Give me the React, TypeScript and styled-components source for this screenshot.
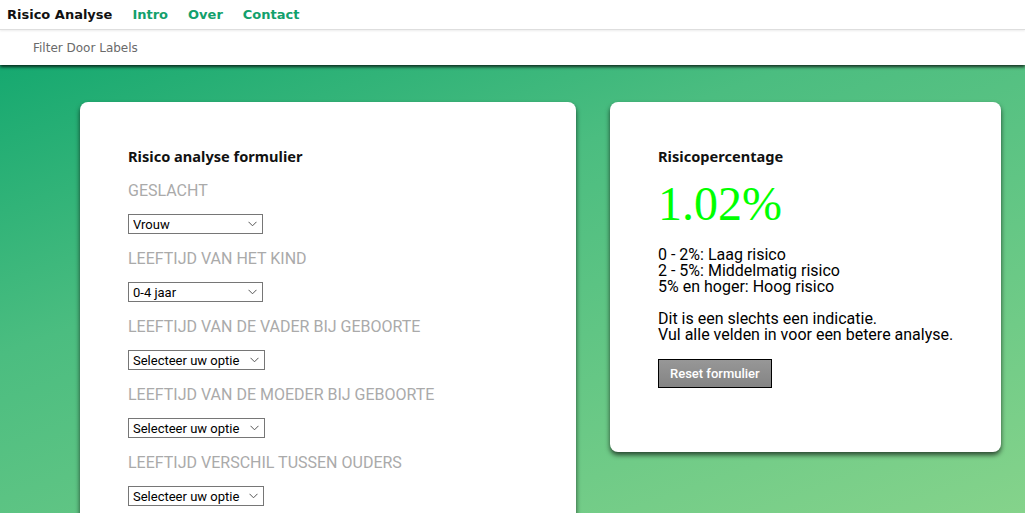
import React from "react";
import styled, { createGlobalStyle } from "styled-components";

const Global = createGlobalStyle`
  html, body { margin: 0; padding: 0; }
  body { font-family: Roboto, "Liberation Sans", sans-serif; background: #fff; overflow: hidden; }
`;

const Page = styled.div`
  width: 1025px;
  height: 513px;
  overflow: hidden;
  display: flex;
  flex-direction: column;
  background: linear-gradient(160deg, #0aa46c 0%, #4bbd80 40%, #85d38b 100%);
`;

const TopBar = styled.nav`
  flex-shrink: 0;
  height: 30px;
  box-sizing: border-box;
  background: #fff;
  display: flex;
  align-items: center;
  gap: 20px;
  padding-left: 7px;
  font-family: "DejaVu Sans", Verdana, sans-serif;
  font-weight: bold;
  font-size: 13px;
  border-bottom: 1px solid #dedede;
  box-shadow: 0 1px 2px rgba(0, 0, 0, 0.08);
  position: relative;
  z-index: 3;
`;

const Brand = styled.span`
  color: #111;
`;

const NavLink = styled.a`
  color: #12a06c;
  text-decoration: none;
`;

const FilterBar = styled.div`
  flex-shrink: 0;
  height: 35px;
  background: #fff;
  display: flex;
  align-items: center;
  padding-left: 33px;
  font-family: "DejaVu Sans", Verdana, sans-serif;
  font-size: 12px;
  color: #6a6a6a;
  box-shadow: 0 2px 3px rgba(0, 0, 0, 0.75);
  position: relative;
  z-index: 2;
`;

const Main = styled.main`
  flex: 1;
  display: flex;
  align-items: flex-start;
  gap: 34px;
  padding: 37px 0 0 80px;
`;

const Card = styled.section<{ $w: number; $h?: number }>`
  width: ${(p) => p.$w}px;
  height: ${(p) => (p.$h ? `${p.$h}px` : "auto")};
  box-sizing: border-box;
  background: #fff;
  border-radius: 8px;
  padding: 44px 30px 48px 48px;
  box-shadow: 0 3px 5px rgba(0, 0, 0, 0.65);
  flex-shrink: 0;
`;

const CardTitle = styled.h2<{ $gap: number }>`
  margin: 0 0 ${(p) => p.$gap}px;
  font-family: "Noto Sans", "Open Sans", sans-serif;
  font-weight: bold;
  font-size: 14.6px;
  line-height: 20px;
  color: #111;
`;

const Field = styled.div`
  display: flex;
  flex-direction: column;
`;

const Label = styled.label`
  height: 34px;
  display: flex;
  align-items: center;
  font-size: 16px;
  color: #aaaaaa;
  text-transform: uppercase;
`;

const SelectRow = styled.div`
  height: 34px;
  display: flex;
  align-items: center;
`;

const SelectWrap = styled.span`
  position: relative;
  display: inline-flex;
`;

const Select = styled.select<{ $w: number }>`
  appearance: none;
  -webkit-appearance: none;
  width: ${(p) => p.$w}px;
  height: 20px;
  font-family: Roboto, "Liberation Sans", sans-serif;
  font-size: 13px;
  color: #000;
  background: #fff;
  border: 1px solid #767676;
  border-radius: 0;
  padding: 0 0 0 4px;
  outline: none;
`;

const Chevron = styled.svg`
  position: absolute;
  right: 6px;
  top: 7px;
  pointer-events: none;
`;

const Big = styled.div`
  font-family: "Liberation Serif", "Times New Roman", serif;
  font-size: 48px;
  line-height: 56px;
  color: #00ff00;
  margin: 0 0 15px;
`;

const Para = styled.p`
  margin: 0 0 16px;
  font-size: 16px;
  line-height: 16px;
  color: #000;
`;

const ResetButton = styled.button`
  height: 29px;
  padding: 0 11px;
  font-family: Roboto, "Liberation Sans", sans-serif;
  font-weight: 500;
  font-size: 13px;
  color: #fff;
  background: linear-gradient(#979797, #848484);
  border: 1px solid #000;
  border-radius: 0;
`;

const fields: { label: string; value: string; w: number }[] = [
  { label: "Geslacht", value: "Vrouw", w: 135 },
  { label: "Leeftijd van het kind", value: "0-4 jaar", w: 135 },
  { label: "Leeftijd van de vader bij geboorte", value: "Selecteer uw optie", w: 137 },
  { label: "Leeftijd van de moeder bij geboorte", value: "Selecteer uw optie", w: 137 },
  { label: "Leeftijd verschil tussen ouders", value: "Selecteer uw optie", w: 136 },
];

export default function App() {
  return (
    <>
      <Global />
      <Page>
        <TopBar>
          <Brand>Risico Analyse</Brand>
          <NavLink href="#">Intro</NavLink>
          <NavLink href="#">Over</NavLink>
          <NavLink href="#">Contact</NavLink>
        </TopBar>
        <FilterBar>Filter Door Labels</FilterBar>
        <Main>
          <Card $w={496}>
            <CardTitle $gap={7}>Risico analyse formulier</CardTitle>
            {fields.map((f) => (
              <Field key={f.label}>
                <Label>{f.label}</Label>
                <SelectRow>
                  <SelectWrap>
                    <Select $w={f.w} defaultValue={f.value}>
                      <option>{f.value}</option>
                    </Select>
                    <Chevron width="9" height="6" viewBox="0 0 9 6">
                      <path d="M0.5 0.8 L4.5 4.8 L8.5 0.8" fill="none" stroke="#555" strokeWidth="1" />
                    </Chevron>
                  </SelectWrap>
                </SelectRow>
              </Field>
            ))}
          </Card>
          <Card $w={391} $h={350}>
            <CardTitle $gap={10}>Risicopercentage</CardTitle>
            <Big>1.02%</Big>
            <Para>
              0 - 2%: Laag risico
              <br />2 - 5%: Middelmatig risico
              <br />5% en hoger: Hoog risico
            </Para>
            <Para>
              Dit is een slechts een indicatie.
              <br />Vul alle velden in voor een betere analyse.
            </Para>
            <ResetButton>Reset formulier</ResetButton>
          </Card>
        </Main>
      </Page>
    </>
  );
}
